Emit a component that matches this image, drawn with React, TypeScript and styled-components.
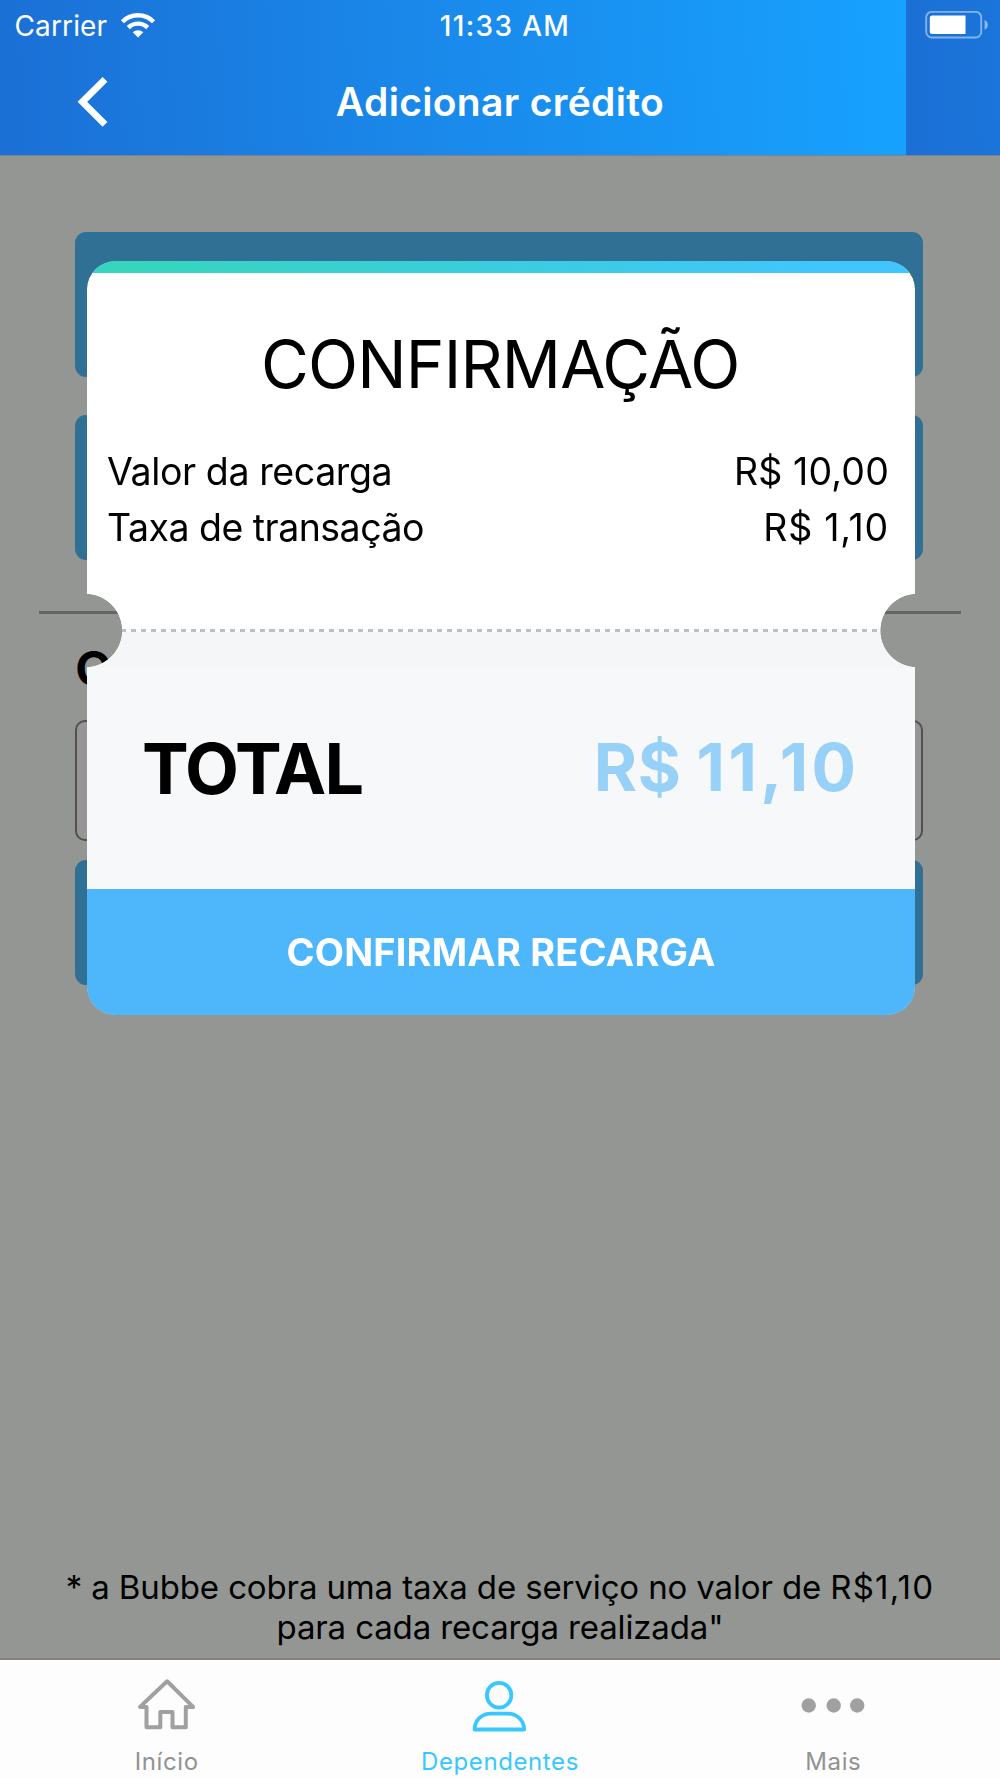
import React from "react";
import styled, { createGlobalStyle } from "styled-components";

const GlobalStyle = createGlobalStyle`
  *, *::before, *::after { box-sizing: border-box; }
  body { margin: 0; background: #949694; }
  button { font: inherit; border: 0; padding: 0; background: none; }
`;

const Screen = styled.div`
  display: flex;
  flex-direction: column;
  width: 1000px;
  height: 1778px;
  overflow: hidden;
  background: #949694;
  color: #000;
  font-family: Inter, "Liberation Sans", sans-serif;
`;

const Tracked = styled.span<{ $tracking: number }>`
  letter-spacing: ${(p) => p.$tracking}px;
`;

const Header = styled.header`
  flex: none;
  height: 156px;
  color: #fff;
  border-bottom: 1px solid #7d8285;
  background: linear-gradient(87deg, #1b6fd5 0%, #1a86e8 42%, #17a2ff 100%) 0 0 / 906px 100% repeat-x;
`;

const StatusBar = styled.div`
  display: grid;
  grid-template-columns: 1fr auto 1fr;
  align-items: center;
  height: 50px;
  padding: 0 11px 0 14.5px;
  font-size: 28px;
  line-height: 34px;
`;

const Carrier = styled.div`
  display: flex;
  align-items: center;
  gap: 12.5px;
  letter-spacing: 0.13px;
  padding-top: 1px;
`;

const Clock = styled.div`
  margin-left: 6.5px;
  padding-top: 1px;
  font-weight: 500;
  letter-spacing: 1.35px;
`;

const Battery = styled.svg`
  justify-self: end;
`;

const NavBar = styled.div`
  display: grid;
  grid-template-columns: 1fr auto 1fr;
  align-items: center;
  height: 104px;
  padding: 0 76px;
`;

const BackButton = styled.button`
  display: flex;
  justify-self: start;
`;

const Title = styled.h1`
  margin: 0;
  font-size: 39px;
  line-height: 48px;
  font-weight: 600;
  letter-spacing: 0.33px;
`;

const Content = styled.main`
  position: relative;
  flex: 1;
  display: flex;
  flex-direction: column;
  padding-top: 76px;
`;

const Fields = styled.div<{ $gap?: number }>`
  display: flex;
  flex-direction: column;
  gap: ${(p) => p.$gap ?? 0}px;
  padding: 0 77.3px 0 75.2px;
`;

const AmountButton = styled.button<{ $height: number }>`
  height: ${(p) => p.$height}px;
  border-radius: 11px;
  background: #2f7094;
`;

const Divider = styled.hr`
  width: 922px;
  height: 3px;
  margin: 51px auto 0;
  border: 0;
  background: #646664;
`;

const FieldLabel = styled.label`
  height: 106px;
  padding-top: 1.5px;
  font-size: 48px;
  line-height: 106px;
  font-weight: 700;
`;

const AmountInput = styled.input`
  height: 120.5px;
  margin-bottom: 19px;
  border: 2px solid #525152;
  border-radius: 10px;
  background: #979596;
`;

const Note = styled.p`
  margin: auto 0 11.5px;
  font-size: 33px;
  line-height: 40px;
  text-align: center;
`;

const NoteLine = styled.span`
  display: block;
  letter-spacing: -0.13px;
`;

const Ticket = styled.section`
  position: absolute;
  top: 105px;
  left: 87px;
  width: 828px;
  height: 753.5px;
  display: flex;
  flex-direction: column;
  border-radius: 28px;
  overflow: hidden;
  background: #fff;
  mask-image:
    radial-gradient(circle at -1.5px 369.5px, transparent 36.2px, #000 36.9px),
    radial-gradient(circle at 830px 369.5px, transparent 36.2px, #000 36.9px);
  mask-composite: intersect;
`;

const TicketStripe = styled.div`
  flex: none;
  height: 12px;
  background: linear-gradient(90deg, #37d5bd 5%, #3acedb 45%, #42c5ff 92%);
`;

const Summary = styled.div`
  flex: none;
  height: 356.4px;
  padding: 51.5px 26px 0 20px;
`;

const TicketTitle = styled.h2`
  margin: 0 0 39px 4.5px;
  font-size: 65.5px;
  line-height: 80px;
  font-weight: 400;
  letter-spacing: -0.8px;
  text-align: center;
`;

const Row = styled.div`
  display: flex;
  justify-content: space-between;
  font-size: 37.5px;
  line-height: 56px;
`;

const Perforation = styled.div`
  flex: none;
  height: 2.6px;
  background: repeating-linear-gradient(90deg, transparent 0 4.84px, #c0c0c0 4.84px 9.87px);
`;

const Tear = styled.div`
  flex: none;
  height: 36.5px;
  background: #f4f6f8;
`;

const TotalRow = styled.div`
  flex: 1;
  display: flex;
  align-items: center;
  justify-content: space-between;
  padding: 0 55.5px 19px 55px;
  background: #f7f8fa;
  font-weight: 700;
`;

const TotalLabel = styled.span`
  font-size: 70px;
  line-height: 84px;
  letter-spacing: -1.6px;
`;

const TotalValue = styled.span`
  margin-top: -5px;
  font-size: 66px;
  line-height: 80px;
  letter-spacing: 0.7px;
  word-spacing: -1.5px;
  color: #98d1f8;
`;

const ConfirmButton = styled.button`
  flex: none;
  height: 125.5px;
  background: #4eb7fb;
  color: #fff;

  span {
    font-size: 38px;
    line-height: 46px;
    font-weight: 700;
    letter-spacing: 0.18px;
  }
`;

const TabBar = styled.nav`
  flex: none;
  display: grid;
  grid-template-columns: repeat(3, 1fr);
  height: 120px;
  border-top: 2px solid #858184;
  background: #fdfdfd;
`;

const Tab = styled.a<{ $active?: boolean }>`
  display: flex;
  flex-direction: column;
  align-items: center;
  gap: 7px;
  padding-top: 10px;
  color: ${(p) => (p.$active ? "#38c8ff" : "#a0a0a0")};
`;

const TabLabel = styled.span<{ $active?: boolean }>`
  font-size: 24px;
  line-height: 30px;
  letter-spacing: 0.6px;
  color: ${(p) => (p.$active ? "#38c8ff" : "#929292")};
`;

const WifiIcon = () => (
  <svg width="36" height="26" viewBox="0 0 36 26" fill="none" stroke="#fff" strokeWidth="4.4">
    <path d="M2.44 8.74a22 22 0 0 1 31.12 0" />
    <path d="M8.31 14.61a13.7 13.7 0 0 1 19.38 0" />
    <path d="M18 24.6l-5.3-5.3a7.8 7.8 0 0 1 10.6 0z" fill="#fff" stroke="none" />
  </svg>
);

const BatteryIcon = () => (
  <Battery width="64" height="28" viewBox="0 0 64 28" fill="none">
    <rect x="1.2" y="0.9" width="55" height="25.6" rx="5.5" stroke="#fff" strokeOpacity="0.45" strokeWidth="1.9" />
    <path d="M59.6 9c2 .8 3.2 2.6 3.2 4.9s-1.2 4.1-3.2 4.9z" fill="#fff" fillOpacity="0.5" />
    <path d="M7.3 4.600h33.200v18.400H7.300a2.500 2.500 0 0 1-2.500-2.500V7.100a2.500 2.500 0 0 1 2.500-2.500z" fill="#fff" />
  </Battery>
);

const BackIcon = () => (
  <svg width="34" height="54" viewBox="0 0 34 54" fill="none" stroke="#fff" strokeWidth="6.8">
    <path d="M29 4.300L6.400 26.800L29 49.300" />
  </svg>
);

const HomeIcon = () => (
  <svg width="80" height="70" viewBox="-2.8 0 80 70" fill="none" stroke="currentColor" strokeWidth="4" strokeLinejoin="round">
    <path d="M37.300 11.300L10.200 36.900H16.700V57.200H30.500V41.900H42.700V57.200H56V36.900H63.300Z" />
  </svg>
);

const PersonIcon = () => (
  <svg width="80" height="70" viewBox="0 0 80 70" fill="none" stroke="currentColor" strokeWidth="3.8" strokeLinejoin="round">
    <ellipse cx="39.100" cy="25.200" rx="12.200" ry="12.400" />
    <path d="M14.600 59.500C14.600 50.500 21.500 43.600 31 43.600H47.600C57 43.600 64.100 50.500 64.100 59.500Z" />
  </svg>
);

const MoreIcon = () => (
  <svg width="80" height="70" viewBox="0 0 80 70" fill="currentColor">
    <circle cx="15.700" cy="35.500" r="7.200" />
    <circle cx="40.700" cy="35.500" r="7.200" />
    <circle cx="64.200" cy="35.500" r="7.200" />
  </svg>
);

const charges = [
  { label: "Valor da recarga", labelTracking: -0.4, value: "R$ 10,00", valueTracking: 0.15 },
  { label: "Taxa de transação", labelTracking: -0.52, value: "R$ 1,10", valueTracking: 0.75 },
];

const tabs = [
  { label: "Início", Icon: HomeIcon },
  { label: "Dependentes", Icon: PersonIcon, active: true },
  { label: "Mais", Icon: MoreIcon },
];

export default function App() {
  return (
    <Screen>
      <GlobalStyle />
      <Header>
        <StatusBar>
          <Carrier>
            <span>Carrier</span>
            <WifiIcon />
          </Carrier>
          <Clock>11:33 AM</Clock>
          <BatteryIcon />
        </StatusBar>
        <NavBar>
          <BackButton>
            <BackIcon />
          </BackButton>
          <Title>Adicionar crédito</Title>
        </NavBar>
      </Header>

      <Content>
        <Fields $gap={38}>
          <AmountButton $height={145} />
          <AmountButton $height={145} />
        </Fields>
        <Divider />
        <Fields>
          <FieldLabel>O</FieldLabel>
          <AmountInput />
          <AmountButton $height={125.5} />
        </Fields>
        <Note>
          <NoteLine>
            * a Bubbe cobra uma taxa de serviço no valor de <Tracked $tracking={1.2}>R$1,10</Tracked>
          </NoteLine>
          <NoteLine>para cada recarga realizada"</NoteLine>
        </Note>

        <Ticket>
          <TicketStripe />
          <Summary>
            <TicketTitle>CONFIRMAÇÃO</TicketTitle>
            {charges.map((c) => (
              <Row key={c.label}>
                <Tracked $tracking={c.labelTracking}>{c.label}</Tracked>
                <Tracked $tracking={c.valueTracking}>{c.value}</Tracked>
              </Row>
            ))}
          </Summary>
          <Perforation />
          <Tear />
          <TotalRow>
            <TotalLabel>TOTAL</TotalLabel>
            <TotalValue>
              R$ <Tracked $tracking={3.4}>11,10</Tracked>
            </TotalValue>
          </TotalRow>
          <ConfirmButton>
            <span>CONFIRMAR RECARGA</span>
          </ConfirmButton>
        </Ticket>
      </Content>

      <TabBar>
        {tabs.map(({ label, Icon, active }) => (
          <Tab key={label} $active={active}>
            <Icon />
            <TabLabel $active={active}>{label}</TabLabel>
          </Tab>
        ))}
      </TabBar>
    </Screen>
  );
}
